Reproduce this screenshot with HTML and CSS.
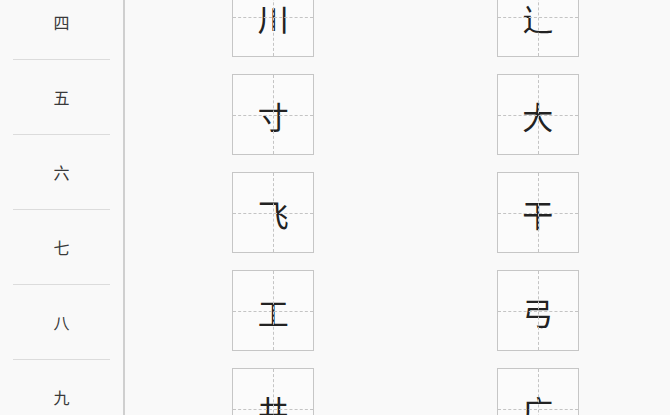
FILE: index.html
```html
<!DOCTYPE html>
<html>
<head>
	<title>笔画练习</title>
	<meta charset="utf-8">
	<meta name="viewport" content="width=device-width, initial-scale=1">
	<link rel="stylesheet" href="styles.css">
</head>
<body>
	<div class="page">
		<ul class="sidebar">
			<li>四</li>
			<li>五</li>
			<li>六</li>
			<li>七</li>
			<li>八</li>
			<li>九</li>
		</ul>

		<div class="main">
			<div class="grid">
				<div class="cell">川</div>
				<div class="cell">辶</div>
				<div class="cell">寸</div>
				<div class="cell">大</div>
				<div class="cell">飞</div>
				<div class="cell">干</div>
				<div class="cell">工</div>
				<div class="cell">弓</div>
				<div class="cell">井</div>
				<div class="cell">广</div>
			</div>
		</div>
	</div>
</body>
</html>
```

FILE: styles.css
```css
html, body {
	margin: 0;
	padding: 0;
	height: 100%;
	overflow: hidden;
}

body {
	font-family: "Noto Sans CJK SC", "Noto Sans", sans-serif;
	background-color: #f9f9f9;
	color: #333333;
}

.page {
	display: flex;
	height: 100%;
}

.sidebar {
	list-style: none;
	margin: 0;
	padding: 0;
	width: 123px;
	flex-shrink: 0;
	border-right: 2px solid #cfcfcf;
	margin-top: -15px;
}

.sidebar li {
	height: 74px;
	width: 97px;
	margin: 0 13px;
	border-bottom: 1px solid #dcdcdc;
	display: flex;
	align-items: center;
	justify-content: center;
	font-size: 16px;
	color: #3a3a3a;
}

.main {
	flex: 1;
	padding-left: 16px;
}

.grid {
	display: grid;
	grid-template-columns: 1fr 1fr;
	row-gap: 17px;
	margin-top: -24px;
	justify-items: center;
}

.cell {
	position: relative;
	width: 80px;
	height: 78px;
	border: 1px solid #c6c6c6;
	background-color: #fbfbfb;
	display: flex;
	align-items: center;
	justify-content: center;
	font-size: 31px;
	color: #222222;
	line-height: 1;
	padding-top: 1px;
	box-sizing: content-box;
}

/* dashed guide lines through the middle */
.cell::before, .cell::after {
	content: "";
	position: absolute;
}

.cell::before {
	left: 0;
	right: 0;
	top: 50%;
	border-top: 1px dashed #c4c4c4;
}

.cell::after {
	top: 0;
	bottom: 0;
	left: 50%;
	border-left: 1px dashed #c4c4c4;
}
```
